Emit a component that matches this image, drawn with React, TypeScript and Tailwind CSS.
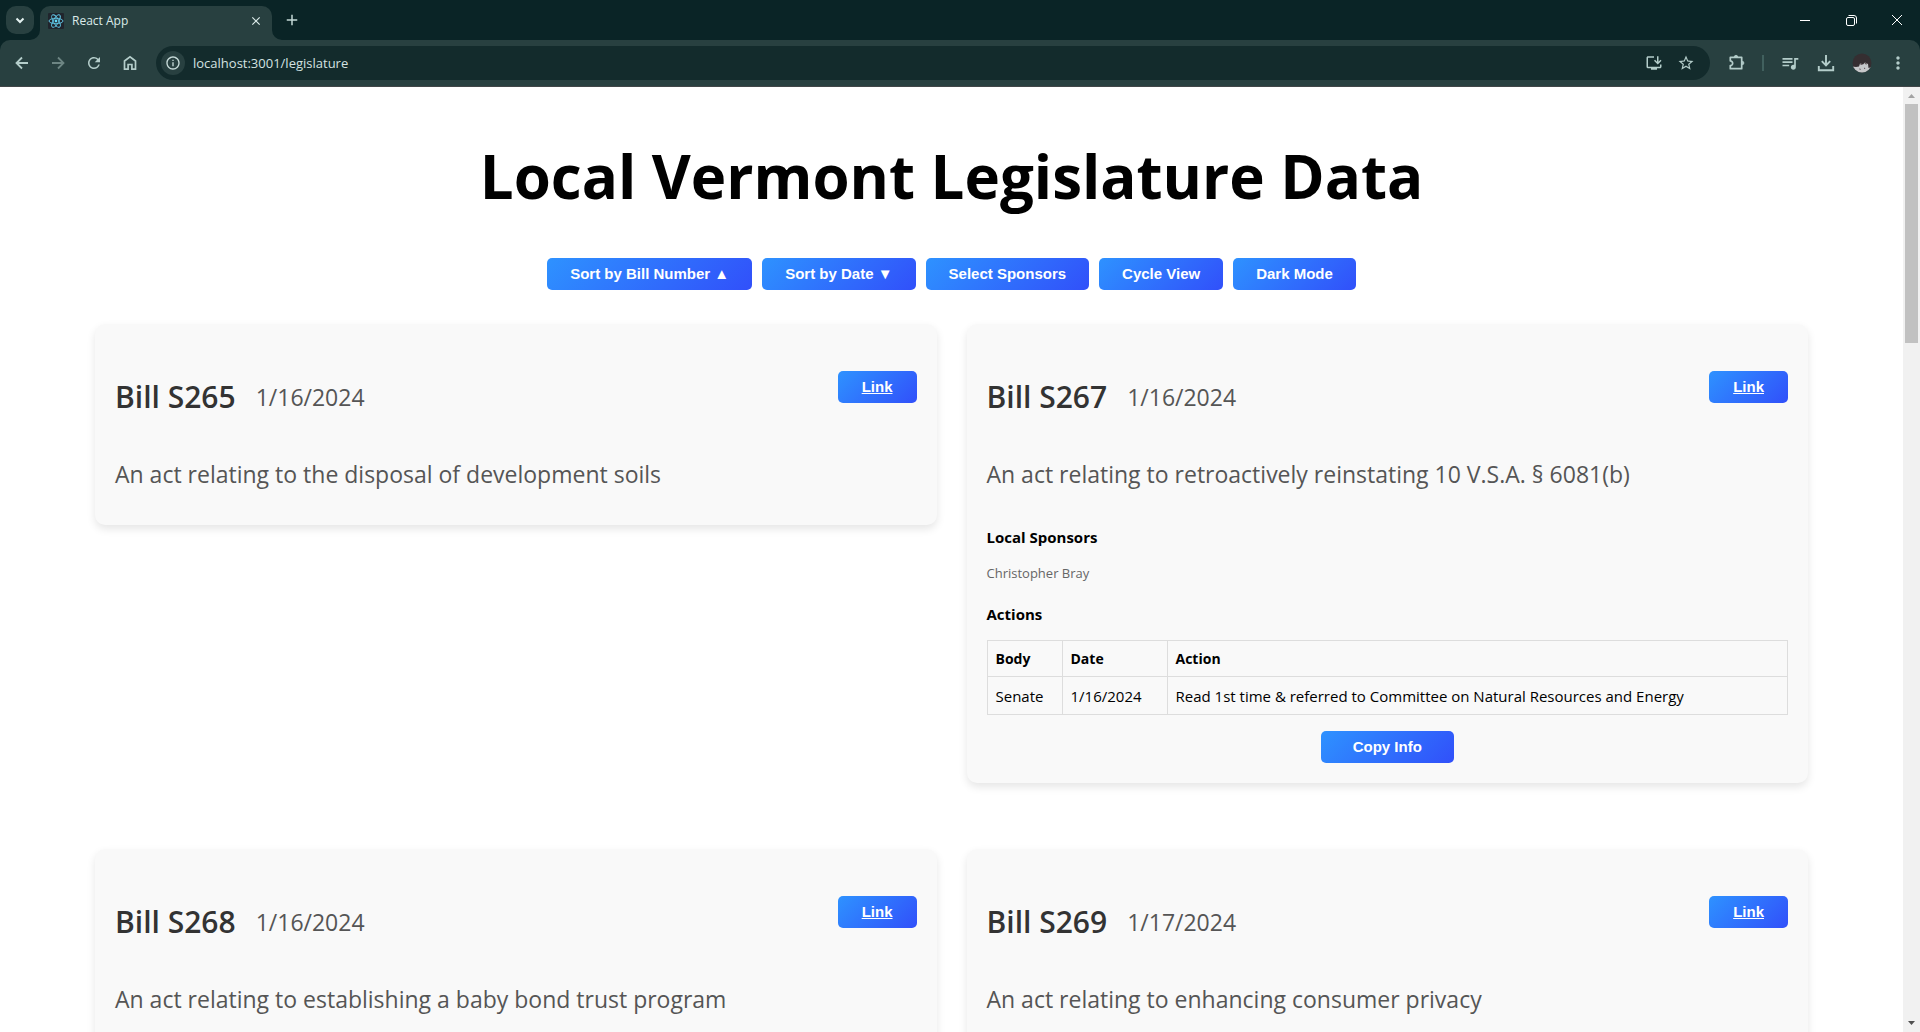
import React from "react";
import type { ReactNode } from "react";
import {
  MdAdd,
  MdClose,
  MdMoreVert,
  MdOutlineInfo,
  MdOutlineInstallDesktop,
  MdQueueMusic,
  MdRefresh,
  MdStarBorder,
} from "react-icons/md";

type Action = { body: string; date: string; text: string };
type Bill = {
  id: string;
  date: string;
  title: string;
  sponsors?: string[];
  actions?: Action[];
};

const bills: Bill[] = [
  {
    id: "S265",
    date: "1/16/2024",
    title: "An act relating to the disposal of development soils",
  },
  {
    id: "S267",
    date: "1/16/2024",
    title: "An act relating to retroactively reinstating 10 V.S.A. § 6081(b)",
    sponsors: ["Christopher Bray"],
    actions: [
      {
        body: "Senate",
        date: "1/16/2024",
        text: "Read 1st time & referred to Committee on Natural Resources and Energy",
      },
    ],
  },
  {
    id: "S268",
    date: "1/16/2024",
    title: "An act relating to establishing a baby bond trust program",
  },
  {
    id: "S269",
    date: "1/17/2024",
    title: "An act relating to enhancing consumer privacy",
  },
];

const gradientButton =
  "h-8 cursor-pointer rounded-[5px] bg-linear-[135deg,#2e92ff,#3150fa] text-center font-['Liberation_Sans',Arial,sans-serif] text-[15px] leading-8 font-bold text-white";

function ToolbarButton({ label, dim, children }: { label: string; dim?: boolean; children: ReactNode }) {
  return (
    <button
      type="button"
      aria-label={label}
      className={`flex h-9 w-9 shrink-0 items-center justify-center rounded-full ${dim ? "text-[#6d8583]" : "text-[#b4cdca]"}`}
    >
      {children}
    </button>
  );
}

function Stroke({ d, size = 20, width = 2 }: { d: string; size?: number; width?: number }) {
  return (
    <svg width={size} height={size} viewBox="0 0 20 20" fill="none" stroke="currentColor" strokeWidth={width}>
      <path d={d} />
    </svg>
  );
}

function ReactLogo() {
  return (
    <svg width="16" height="16" viewBox="0 0 32 32">
      <rect width="32" height="32" rx="2" fill="#20242c" />
      <g fill="none" stroke="#61c8e8" strokeWidth="1.8">
        <ellipse cx="16" cy="16" rx="14" ry="5.4" />
        <ellipse cx="16" cy="16" rx="14" ry="5.4" transform="rotate(60 16 16)" />
        <ellipse cx="16" cy="16" rx="14" ry="5.4" transform="rotate(120 16 16)" />
      </g>
      <circle cx="16" cy="16" r="2.8" fill="#61dafb" />
    </svg>
  );
}

function Avatar() {
  return (
    <svg width="20" height="20" viewBox="0 0 20 20">
      <defs>
        <clipPath id="avatar-clip">
          <circle cx="10" cy="10" r="9.5" />
        </clipPath>
      </defs>
      <g clipPath="url(#avatar-clip)">
        <rect width="20" height="20" fill="#352e31" />
        <path d="M0 13.500 4 14l3-.5 1-3 3 1 2-2 3 1.500 .5 4 3.500-1V20H0Z" fill="#c6c8ca" />
        <path d="M8 11.500 9.500 10l1 2ZM12.500 11l1.500-1.500 1 2ZM7 15.500l2 .5-1 1ZM12 14.500l1.500 1-1.500 .5Z" fill="#55474a" />
      </g>
    </svg>
  );
}

function TabStrip() {
  return (
    <div className="flex h-10 items-stretch justify-between bg-[#0a2426]">
      <div className="flex">
        <button
          type="button"
          aria-label="Search tabs"
          className="mt-[6px] ml-[6px] flex h-7 w-7 items-center justify-center rounded-[10px] bg-[#284040] text-[#e4f2f1]"
        >
          <Stroke d="M6.500 8.500 10 12l3.500-3.500" />
        </button>
        <div className="relative mt-[6px] ml-[6px] flex w-[232px] items-center rounded-t-[10px] bg-[#284040] px-2 pb-1">
          <svg className="absolute bottom-0 -left-[10px]" width="10" height="10" viewBox="0 0 10 10">
            <path d="M10 0v10H0A10 10 0 0 0 10 0Z" fill="#284040" />
          </svg>
          <svg className="absolute -right-[10px] bottom-0" width="10" height="10" viewBox="0 0 10 10">
            <path d="M0 0v10h10A10 10 0 0 1 0 0Z" fill="#284040" />
          </svg>
          <ReactLogo />
          <span className="ml-2 flex-1 text-xs text-[#dcebea]">React App</span>
          <button type="button" aria-label="Close tab" className="flex h-4 w-4 items-center justify-center text-[#dcebea]">
            <MdClose size={14} />
          </button>
        </div>
        <button
          type="button"
          aria-label="New tab"
          className="mt-[6px] ml-[6px] flex h-7 w-7 items-center justify-center text-[#c3d8d6]"
        >
          <MdAdd size={18} />
        </button>
      </div>
      <div className="flex text-white">
        <button type="button" aria-label="Minimize" className="flex w-[46px] items-center justify-center">
          <svg width="10" height="10" viewBox="0 0 10 10" stroke="currentColor">
            <path d="M0 5.500h10" />
          </svg>
        </button>
        <button type="button" aria-label="Restore" className="flex w-[46px] items-center justify-center">
          <svg width="11" height="11" viewBox="0 0 11 11" fill="none" stroke="currentColor">
            <rect x=".5" y="2.500" width="8" height="8" rx="1.500" />
            <path d="M2.500 .5H8a2.500 2.500 0 0 1 2.500 2.500v5.500" />
          </svg>
        </button>
        <button type="button" aria-label="Close window" className="flex w-[46px] items-center justify-center">
          <svg width="10" height="10" viewBox="0 0 10 10" stroke="currentColor">
            <path d="m0 0 10 10M10 0 0 10" />
          </svg>
        </button>
      </div>
    </div>
  );
}

function Toolbar() {
  return (
    <div className="bg-[#0a2426]">
      <div className="flex h-[47px] items-center rounded-t-[10px] border-b border-[#414648] bg-[#284040] px-1">
        <ToolbarButton label="Back">
          <Stroke d="M16 10H5M10 4.500 4.500 10l5.500 5.500" width={1.8} />
        </ToolbarButton>
        <ToolbarButton label="Forward" dim>
          <Stroke d="M4 10h11M10 4.500l5.500 5.500-5.500 5.500" width={1.8} />
        </ToolbarButton>
        <ToolbarButton label="Reload">
          <MdRefresh size={18} />
        </ToolbarButton>
        <ToolbarButton label="Home">
          <Stroke d="M4.500 16.200V8L10 3.800 15.500 8v8.200h-3.600v-4.700H8.100v4.700Z" width={1.7} />
        </ToolbarButton>
        <div className="mr-2 ml-2 flex h-[34px] flex-1 items-center rounded-full bg-[#132b2c] pr-2">
          <button
            type="button"
            aria-label="View site information"
            className="ml-[5px] flex h-6 w-6 items-center justify-center rounded-full bg-[#284040] text-[#c8dcda]"
          >
            <MdOutlineInfo size={16} />
          </button>
          <input
            aria-label="Address"
            defaultValue="localhost:3001/legislature"
            className="ml-2 min-w-0 flex-1 bg-transparent pt-px text-[13px] text-[#d3e2e1] outline-none"
          />
          <button type="button" aria-label="Install app" className="flex h-8 w-8 items-center justify-center text-[#b4cdca]">
            <MdOutlineInstallDesktop size={18} />
          </button>
          <button type="button" aria-label="Bookmark this page" className="flex h-8 w-8 items-center justify-center text-[#b4cdca]">
            <MdStarBorder size={18} />
          </button>
        </div>
        <ToolbarButton label="Extensions">
          <svg width="20" height="20" viewBox="0 0 20 20" fill="none" stroke="currentColor" strokeWidth="1.700" strokeLinejoin="round">
            <path d="M4.300 4.300h11.400v11.400H4.300v-3.200a2.200 2.200 0 0 0 0-4.700Z" />
            <path d="M8.300 4a1.700 1.700 0 0 1 3.400 0ZM16.200 8.300a1.700 1.700 0 0 1 0 3.400Z" fill="currentColor" strokeWidth=".8" />
          </svg>
        </ToolbarButton>
        <div className="mx-2 h-4 w-[2px] bg-[#41605e]" />
        <ToolbarButton label="Media controls">
          <MdQueueMusic size={20} />
        </ToolbarButton>
        <ToolbarButton label="Downloads">
          <Stroke d="M10 2v10M5.800 8.200 10 12.400l4.200-4.200M2.800 13v4.200h14.400V13" width={1.9} />
        </ToolbarButton>
        <ToolbarButton label="Profile">
          <Avatar />
        </ToolbarButton>
        <ToolbarButton label="Menu">
          <MdMoreVert size={20} />
        </ToolbarButton>
      </div>
    </div>
  );
}

function BillCard({ bill }: { bill: Bill }) {
  return (
    <article className="rounded-[10px] bg-[#f9f9f9] px-5 pt-[47px] pb-5 shadow-[0_4px_8px_rgba(0,0,0,0.1)]">
      <header className="flex items-start justify-between">
        <div className="flex h-[52px] items-center gap-5">
          <h2 className="text-[30px] leading-10 font-semibold text-[#333]">Bill {bill.id}</h2>
          <span className="text-[23px] leading-8 text-[#555]">{bill.date}</span>
        </div>
        <a href="#" className={`${gradientButton} px-6 underline`}>
          Link
        </a>
      </header>
      <p className="mt-[35px] mb-[15px] text-[23px] leading-8 text-[#555]">{bill.title}</p>
      {bill.sponsors && (
        <section className="mt-[37px]">
          <h3 className="text-[15px] leading-5 font-bold">Local Sponsors</h3>
          {bill.sponsors.map((name) => (
            <p key={name} className="mt-4 text-[13px] leading-5 text-[#666]">
              {name}
            </p>
          ))}
        </section>
      )}
      {bill.actions && (
        <section className="mt-[21px]">
          <h3 className="text-[15px] leading-5 font-bold">Actions</h3>
          <table className="mt-4 w-full border-collapse text-left">
            <thead>
              <tr className="h-9 text-[14px] leading-5">
                <th className="w-[75px] border border-[#ddd] px-2 font-bold">Body</th>
                <th className="w-[105px] border border-[#ddd] px-2 font-bold">Date</th>
                <th className="border border-[#ddd] px-2 font-bold">Action</th>
              </tr>
            </thead>
            <tbody>
              {bill.actions.map((action) => (
                <tr key={action.text} className="h-[38px] text-[15px] leading-5">
                  <td className="border border-[#ddd] px-2">{action.body}</td>
                  <td className="border border-[#ddd] px-2">{action.date}</td>
                  <td className="border border-[#ddd] px-2">{action.text}</td>
                </tr>
              ))}
            </tbody>
          </table>
          <div className="mt-4 flex justify-center">
            <button type="button" className={`${gradientButton} px-8`}>
              Copy Info
            </button>
          </div>
        </section>
      )}
    </article>
  );
}

function Scrollbar() {
  return (
    <div className="flex w-[17px] shrink-0 flex-col items-center bg-[#f1f1f1]" aria-hidden="true">
      <svg width="17" height="17" viewBox="0 0 17 17">
        <path d="M5 11h7L8.500 7Z" fill="#a3a3a3" />
      </svg>
      <div className="h-[239px] w-[13px] bg-[#c1c1c1]" />
      <svg className="mt-auto" width="17" height="17" viewBox="0 0 17 17">
        <path d="M5 6h7l-3.500 4Z" fill="#505050" />
      </svg>
    </div>
  );
}

export default function App() {
  return (
    <div className="flex h-screen flex-col overflow-hidden bg-white font-['Open_Sans',sans-serif] text-black">
      <TabStrip />
      <Toolbar />
      <div className="flex min-h-0 flex-1">
        <main className="min-w-0 flex-1 overflow-hidden px-[95px]">
          <h1 className="mt-[49px] text-center text-[60px] leading-20 font-bold">Local Vermont Legislature Data</h1>
          <div className="mt-[42px] flex justify-center gap-[10px]">
            <button type="button" className={`${gradientButton} px-[23px]`}>Sort by Bill Number ▲</button>
            <button type="button" className={`${gradientButton} px-[23px]`}>Sort by Date ▼</button>
            <button type="button" className={`${gradientButton} px-[23px]`}>Select Sponsors</button>
            <button type="button" className={`${gradientButton} px-[23px]`}>Cycle View</button>
            <button type="button" className={`${gradientButton} px-[23px]`}>Dark Mode</button>
          </div>
          <div className="mt-[34px] grid grid-cols-2 items-start gap-x-[30px] gap-y-[66px]">
            {bills.map((bill) => (
              <BillCard key={bill.id} bill={bill} />
            ))}
          </div>
        </main>
        <Scrollbar />
      </div>
    </div>
  );
}
